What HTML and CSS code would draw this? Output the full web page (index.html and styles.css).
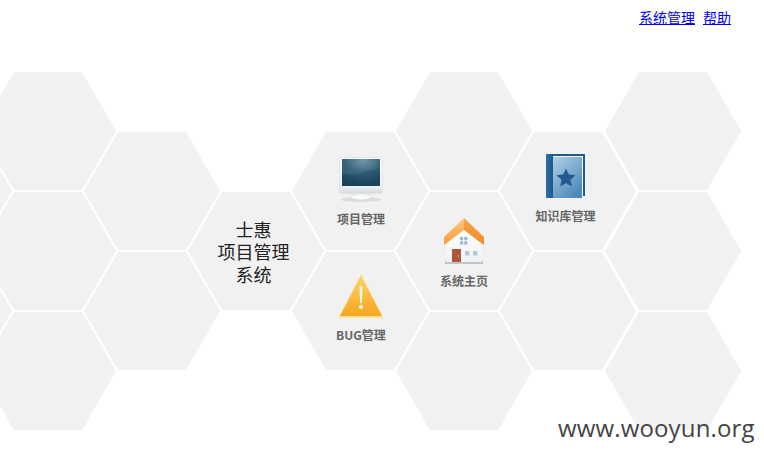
FILE: index.html
```html
<!DOCTYPE html>
<html lang="zh-CN">
<head>
<meta charset="utf-8">
<title>士惠项目管理系统</title>
<link rel="stylesheet" href="styles.css">
</head>
<body>
<header class="topbar">
  <a href="#" class="toplink">系统管理</a>
  <a href="#" class="toplink">帮助</a>
</header>
<main class="comb">
  <div class="col col-low">
    <div class="hex"></div>
    <div class="hex"></div>
  </div>
  <div class="col">
    <div class="hex"></div>
    <div class="hex"></div>
    <div class="hex"></div>
  </div>
  <div class="col col-low">
    <div class="hex"></div>
    <div class="hex"></div>
  </div>
  <div class="col col-mid">
    <div class="hex hex-title"><h1 class="title">士惠<br>项目管理<br>系统</h1></div>
  </div>
  <div class="col col-low">
    <a href="#" class="hex hex-item hex-monitor">
      <svg class="icon" viewBox="0 0 48 48" width="48" height="48">
        <defs>
          <linearGradient id="bezel" x1="0" y1="0" x2="0" y2="1"><stop offset="0" stop-color="#f8fafb"/><stop offset="0.8" stop-color="#eef3f5"/><stop offset="1" stop-color="#d3d8da"/></linearGradient>
          <radialGradient id="screen" cx="0.55" cy="0.05" r="0.9"><stop offset="0" stop-color="#6b8fa1"/><stop offset="0.5" stop-color="#2f5c75"/><stop offset="1" stop-color="#1b4259"/></radialGradient>
        </defs>
        <ellipse cx="24" cy="44.500" rx="20" ry="2.500" fill="#dcdcdc"/>
        <path d="M16 38h16l2 3.500c0 2-4 3-10 3s-10-1-10-3z" fill="#e2e6e7"/>
        <ellipse cx="24" cy="42" rx="9.500" ry="2.600" fill="#f7f9f9"/>
        <rect x="2.500" y="2.500" width="43" height="36" rx="2" fill="url(#bezel)" stroke="#e1e5e6"/>
        <rect x="5" y="4" width="38" height="27" fill="url(#screen)"/>
        <path d="M5 4h38v9L16 20 5 19z" fill="#fff" opacity="0.07"/>
      </svg>
      <span class="label">项目管理</span>
    </a>
    <a href="#" class="hex hex-item hex-warn">
      <svg class="icon" viewBox="0 0 48 48" width="48" height="48">
        <defs>
          <linearGradient id="warn" x1="0" y1="0" x2="0" y2="1"><stop offset="0" stop-color="#fdd56a"/><stop offset="0.7" stop-color="#f9b333"/><stop offset="1" stop-color="#f6a821"/></linearGradient>
        </defs>
        <path d="M24 2 46 44.500Q46.500 46 45 46H3Q1.500 46 2 44.500z" fill="#fde39a"/>
        <path d="M24 3.500 45 44H3z" fill="url(#warn)"/>
        <path d="M22.500 14h3l-.6 17h-1.800z" fill="#fffbe8"/>
        <circle cx="24" cy="35" r="2" fill="#fffbe8"/>
      </svg>
      <span class="label">BUG管理</span>
    </a>
  </div>
  <div class="col">
    <div class="hex"></div>
    <a href="#" class="hex hex-item hex-home">
      <svg class="icon" viewBox="0 0 48 48" width="48" height="48">
        <defs>
          <linearGradient id="roofl" x1="0" y1="0" x2="0" y2="1"><stop offset="0" stop-color="#ffc982"/><stop offset="1" stop-color="#f99a34"/></linearGradient>
          <linearGradient id="roofr" x1="0" y1="0" x2="0" y2="1"><stop offset="0" stop-color="#f8a64f"/><stop offset="1" stop-color="#ef8a22"/></linearGradient>
          <linearGradient id="wall" x1="0" y1="0" x2="0" y2="1"><stop offset="0" stop-color="#ffffff"/><stop offset="1" stop-color="#eef1f4"/></linearGradient>
        </defs>
        <rect x="5" y="44.500" width="38" height="2.500" fill="#c4c4c4"/>
        <path d="M7 27 24 13l17 14v18H7z" fill="url(#wall)"/>
        <path d="M24 1 4 20v8L24 13z" fill="url(#roofl)"/>
        <path d="M24 1 44 20v8L24 13z" fill="url(#roofr)"/>
        <rect x="12" y="32" width="9" height="13" fill="#a9583a"/>
        <circle cx="18.500" cy="39" r="0.700" fill="#f3c98a"/>
        <path d="M20 20h3.200v3.200H20zm4.200 0h3.200v3.200h-3.200zM20 24.200h3.200v3.200H20zm4.200 0h3.200v3.200h-3.200z" fill="#9db8cc"/>
        <path d="M25 34h4.500v4.500H25zm8 0h4.500v4.500H33z" fill="#b7c6d3"/>
      </svg>
      <span class="label">系统主页</span>
    </a>
    <div class="hex"></div>
  </div>
  <div class="col col-low">
    <a href="#" class="hex hex-item hex-book">
      <svg class="icon" viewBox="0 0 48 48" width="48" height="48">
        <defs>
          <linearGradient id="cover" x1="0" y1="0" x2="0.700" y2="1"><stop offset="0" stop-color="#b3d0e5"/><stop offset="1" stop-color="#4c8abb"/></linearGradient>
          <linearGradient id="spine" x1="0" y1="0" x2="1" y2="0"><stop offset="0" stop-color="#2f6ea6"/><stop offset="1" stop-color="#1d5890"/></linearGradient>
        </defs>
        <path d="M7 2h34.500v2H7z" fill="#1d5a8e"/>
        <path d="M41 2h2v42h-2z" fill="#1f5c90"/>
        <rect x="39" y="4" width="2" height="40" fill="#f4f7fa"/>
        <rect x="11" y="5" width="29" height="41" fill="url(#cover)"/>
        <rect x="4" y="2" width="7" height="44" fill="url(#spine)"/>
        <path d="M24 16.500 26.800 22.500 33.500 23.300 28.500 27.800 29.900 34.500 24 31.100 18.100 34.500 19.500 27.800 14.500 23.300 21.200 22.500z" fill="#23598f"/>
      </svg>
      <span class="label">知识库管理</span>
    </a>
    <div class="hex"></div>
  </div>
  <div class="col col-last">
    <div class="hex"></div>
    <div class="hex"></div>
    <div class="hex"></div>
  </div>
</main>
<div class="watermark">www.wooyun.org</div>
</body>
</html>
```
FILE: styles.css
```css
* { box-sizing: border-box; }

html, body {
  margin: 0;
  padding: 0;
  height: 457px;
  overflow: hidden;
  background: #fff;
  font-family: "Noto Sans CJK SC", "Liberation Sans", sans-serif;
}

.topbar {
  height: 72px;
  padding: 8px 33px 0 0;
  display: flex;
  justify-content: flex-end;
  align-items: flex-start;
  gap: 8px;
}

.toplink {
  font-size: 14px;
  line-height: 18px;
  color: #0000ee;
  text-decoration: underline;
}

.comb {
  display: flex;
  align-items: flex-start;
  margin-left: -124px;
}

.col {
  flex: none;
  width: 136px;
  margin-right: -32px;
  display: flex;
  flex-direction: column;
  gap: 2px;
}

.col-low { padding-top: 60px; }
.col-mid { padding-top: 120px; }
.col-last { margin-left: 1px; }

.hex {
  width: 136px;
  height: 118px;
  background: #f1f1f1;
  clip-path: polygon(25% 0, 75% 0, 100% 50%, 75% 100%, 25% 100%, 0 50%);
}

.hex-title {
  display: flex;
  align-items: center;
  justify-content: center;
  padding: 1px 5px 0 0;
}

.title {
  margin: 0;
  font-size: 18px;
  font-weight: 400;
  line-height: 22.5px;
  text-align: center;
  color: #222;
}

.hex-item {
  display: flex;
  flex-direction: column;
  align-items: center;
  text-decoration: none;
}

.icon { display: block; flex: none; }

.label {
  margin-top: 8px;
  font-size: 12px;
  font-weight: 700;
  line-height: 16px;
  color: #666;
}

.hex-monitor { padding: 23px 0 0 2px; }
.hex-home { padding-top: 25px; }
.hex-warn { padding: 20px 0 0 2px; }
.hex-warn .label { margin-top: 7px; }
.hex-book { padding: 20px 5px 0 0; }

.watermark {
  position: absolute;
  left: 558px;
  top: 411px;
  font-family: "Open Sans", sans-serif;
  font-size: 24px;
  letter-spacing: 0.15px;
  line-height: 34px;
  color: #444;
}
```
